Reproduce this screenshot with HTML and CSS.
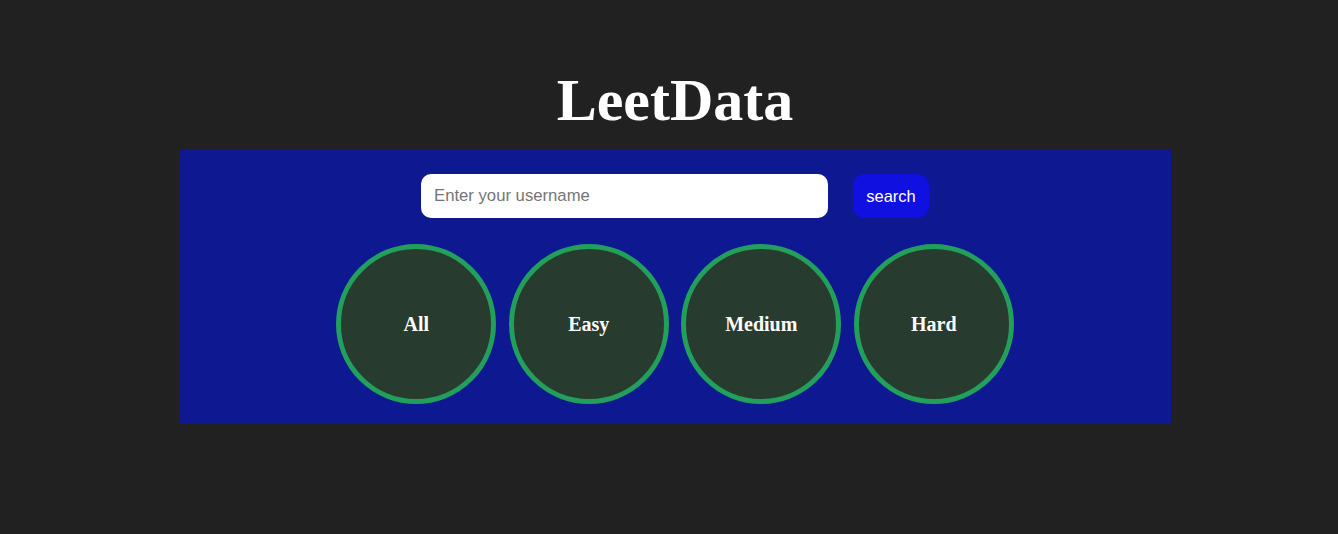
FILE: index.html
```html
<!DOCTYPE html>
<html lang="en">
<head>
<meta charset="utf-8">
<title>LeetData</title>
<link rel="stylesheet" href="styles.css">
</head>
<body>
  <div class="page">
    <h1 class="title">LeetData</h1>
    <section class="panel">
      <div class="search-row">
        <input class="search-input" type="text" placeholder="Enter your username">
        <button class="search-btn" type="button">search</button>
      </div>
      <div class="stats">
        <div class="circle"><span class="label">All</span></div>
        <div class="circle"><span class="label">Easy</span></div>
        <div class="circle"><span class="label">Medium</span></div>
        <div class="circle"><span class="label">Hard</span></div>
      </div>
    </section>
  </div>
</body>
</html>
```

FILE: styles.css
```css
html, body {
  margin: 0;
  padding: 0;
  background: #212121;
  height: 100%;
}

.page {
  padding-left: 12px;
  display: flex;
  flex-direction: column;
  align-items: center;
}

.title {
  margin: 66px 0 15px 0;
  font-family: "Liberation Serif", "Times New Roman", serif;
  font-weight: bold;
  font-size: 60px;
  line-height: 69px;
  color: #ffffff;
}

.panel {
  width: 992px;
  box-sizing: border-box;
  background: #0d1891;
  padding: 24px 0 20px 0;
  display: flex;
  flex-direction: column;
  align-items: center;
  gap: 26px;
}

.search-row {
  display: flex;
  align-items: center;
  gap: 25px;
}

.search-input {
  width: 407px;
  height: 44px;
  box-sizing: border-box;
  border: none;
  border-radius: 10px;
  background: #ffffff;
  padding: 0 13px;
  font-family: "Liberation Sans", Arial, sans-serif;
  font-size: 16.7px;
  color: #333;
  outline: none;
}

.search-input::placeholder {
  color: #757575;
}

.search-btn {
  width: 76px;
  height: 44px;
  box-sizing: border-box;
  border: none;
  border-radius: 12px;
  background: #1010e0;
  color: #ffffff;
  font-family: "Liberation Sans", Arial, sans-serif;
  font-size: 16.5px;
  padding: 0;
}

.stats {
  display: flex;
  gap: 12.5px;
}

.circle {
  width: 160px;
  height: 160px;
  box-sizing: border-box;
  border: 5px solid #22a05b;
  border-radius: 50%;
  background: #283b2f;
  display: flex;
  align-items: center;
  justify-content: center;
}

.label {
  font-family: "Liberation Serif", "Times New Roman", serif;
  font-weight: bold;
  font-size: 20px;
  color: #ffffff;
}
```
